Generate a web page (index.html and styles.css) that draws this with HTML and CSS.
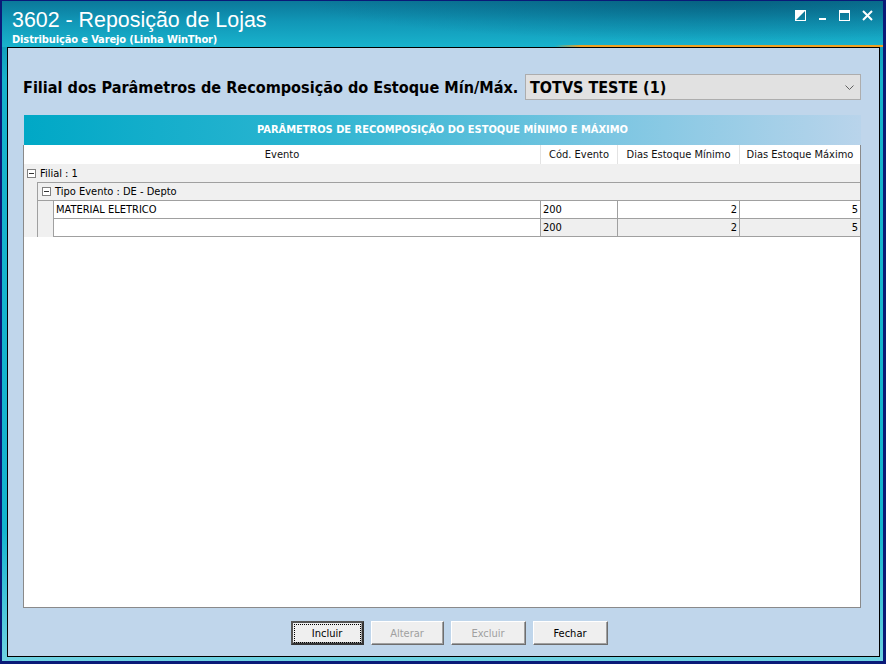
FILE: index.html
```html
<!DOCTYPE html>
<html>
<head>
    <meta charset="utf-8">
    <title>3602 - Reposição de Lojas</title>
    <link rel="stylesheet" href="styles.css">
</head>
<body>
    <div class="window">
        <div class="titlebar">
            <div class="title-text">
                <div class="title">3602 - Reposição de Lojas</div>
                <div class="subtitle">Distribuição e Varejo (Linha WinThor)</div>
            </div>
            <div class="win-controls">
                <svg width="11" height="11" viewBox="0 0 11 11">
                    <rect x="0.5" y="0.5" width="10" height="10" fill="none" stroke="#fff"/>
                    <polygon points="0,0 11,0 0,11" fill="#fff"/>
                </svg>
                <svg width="9" height="11" viewBox="0 0 9 11">
                    <rect x="1" y="8" width="7" height="2" fill="#fff"/>
                </svg>
                <svg width="11" height="11" viewBox="0 0 11 11">
                    <rect x="0.5" y="0.5" width="10" height="10" fill="none" stroke="#fff"/>
                    <rect x="0" y="0" width="11" height="3" fill="#fff"/>
                </svg>
                <svg width="11" height="11" viewBox="0 0 11 11">
                    <path d="M1 1 L10 10 M10 1 L1 10" stroke="#fff" stroke-width="2"/>
                </svg>
            </div>
            <div class="accent-line"></div>
        </div>

        <div class="client">
            <div class="filter-row">
                <label class="filter-label">Filial dos Parâmetros de Recomposição do Estoque Mín/Máx.</label>
                <div class="combo">
                    <span class="combo-text">TOTVS TESTE (1)</span>
                    <svg class="combo-arrow" width="9" height="5" viewBox="0 0 9 5">
                        <path d="M0.5 0.5 L4.5 4.5 L8.5 0.5" fill="none" stroke="#606060"/>
                    </svg>
                </div>
            </div>

            <div class="group-caption">PARÂMETROS DE RECOMPOSIÇÃO DO ESTOQUE MÍNIMO E MÁXIMO</div>

            <div class="grid">
                <div class="grid-head">
                    <div class="hcell">Evento</div>
                    <div class="hcell">Cód. Evento</div>
                    <div class="hcell">Dias Estoque Mínimo</div>
                    <div class="hcell">Dias Estoque Máximo</div>
                </div>

                <div class="group-row level1"><span class="toggle"></span>Filial : 1</div>
                <div class="group-body">
                    <div class="indent level1"></div>
                    <div class="group-content">
                        <div class="group-row level2"><span class="toggle"></span>Tipo Evento : DE - Depto</div>
                        <div class="group-body">
                            <div class="indent level2"></div>
                            <div class="group-content">
                                <div class="data-row">
                                    <div class="cell">MATERIAL ELETRICO</div>
                                    <div class="cell">200</div>
                                    <div class="cell num">2</div>
                                    <div class="cell num">5</div>
                                </div>
                                <div class="data-row summary">
                                    <div class="cell"></div>
                                    <div class="cell">200</div>
                                    <div class="cell num">2</div>
                                    <div class="cell num">5</div>
                                </div>
                            </div>
                        </div>
                    </div>
                </div>
            </div>

            <div class="buttons">
                <button class="btn default"><span class="focus">Incluir</span></button>
                <button class="btn" disabled>Alterar</button>
                <button class="btn wide" disabled>Excluir</button>
                <button class="btn wide">Fechar</button>
            </div>
        </div>
    </div>
</body>
</html>
```

FILE: styles.css
```css
body {
    margin: 0;
    font-family: "DejaVu Sans Condensed", "DejaVu Sans", sans-serif;
    font-size: 11px;
    color: #000;
}
.window {
    width: 886px;
    height: 664px;
    box-sizing: border-box;
    border-left: 2px solid #0a1a78;
    border-right: 3px solid #0a1a78;
    border-bottom: 3px solid #0a1a78;
    border-top: 1px solid #0a1a78;
    background: linear-gradient(to bottom, #0d84a4 0%, #17b2cc 12%, #13b4cf 80%, #6fd2e2 100%);
    display: flex;
    flex-direction: column;
}

/* title bar */
.titlebar {
    position: relative;
    height: 46px;
    flex-shrink: 0;
    background:
        radial-gradient(ellipse 420px 40px at 720px 0px, rgba(0, 70, 100, 0.45), rgba(0, 70, 100, 0) 100%),
        linear-gradient(to bottom, #0b789a 0%, #1197b7 45%, #19b3cd 100%);
    display: flex;
    justify-content: space-between;
}
.title-text {
    padding: 8px 0 0 10px;
    color: #fff;
}
.title {
    font-family: "Liberation Sans", Arial, sans-serif;
    font-size: 21.4px;
    line-height: 22px;
}
.subtitle {
    font-weight: bold;
    font-size: 11px;
    line-height: 14px;
    margin-top: 2px;
    letter-spacing: -0.12px;
}
.win-controls {
    display: flex;
    gap: 12px;
    align-items: center;
    height: 11px;
    margin: 9px 10px 0 0;
}
.win-controls svg {
    display: block;
}
.accent-line {
    position: absolute;
    left: 553px;
    right: 0;
    bottom: 0;
    height: 2px;
    background: linear-gradient(to right, rgba(240, 160, 32, 0) 0%, #f0a020 8%, #f0a020 100%);
}

/* main area */
.client {
    flex: 1;
    margin: 0 3px 4px 5px;
    border: 1px solid #000;
    background: #c0d6eb;
    display: flex;
    flex-direction: column;
    padding: 25px 18px 0 15px;
}
.filter-row {
    display: flex;
    align-items: center;
    justify-content: space-between;
    height: 28px;
}
.filter-label {
    font-weight: bold;
    font-size: 16.1px;
    color: #000;
}
.combo {
    width: 336px;
    height: 26px;
    box-sizing: border-box;
    border: 1px solid #adadad;
    background: #e1e1e1;
    display: flex;
    align-items: center;
    justify-content: space-between;
    padding: 0 6px 0 4px;
}
.combo-text {
    font-weight: bold;
    font-size: 16px;
}
.group-caption {
    margin: 14px 0 0 1px;
    height: 30px;
    line-height: 30px;
    text-align: center;
    color: #fff;
    font-weight: bold;
    font-size: 11px;
    background: linear-gradient(to right, #00a8c6 0%, #2db5d1 35%, #7cc6e2 70%, #b9d4eb 100%);
}

/* tree grid */
.grid {
    flex: 1;
    background: #fff;
    border: 1px solid #8a8a8a;
    border-top: none;
}
.grid-head, .data-row {
    display: grid;
    grid-template-columns: 1fr 77px 122px 120px;
}
.hcell {
    height: 19px;
    line-height: 20px;
    text-align: center;
    border-right: 1px solid #e3e3e3;
    color: #111;
}
.hcell:last-child {
    border-right: none;
}
.group-row {
    height: 17px;
    line-height: 17px;
    background: #f0f0f0;
    border-bottom: 1px solid #a0a0a0;
    display: flex;
    align-items: center;
}
.group-row.level1 {
    padding-left: 3px;
    border-bottom: none;
    height: 18px;
}
.group-row.level2 {
    padding-left: 4px;
}
.toggle {
    width: 7px;
    height: 7px;
    border: 1px solid #808080;
    background: #fff;
    margin-right: 4px;
    position: relative;
}
.toggle::after {
    content: "";
    position: absolute;
    left: 1px;
    right: 1px;
    top: 3px;
    height: 1px;
    background: #333;
}
.group-body {
    display: flex;
}
.indent {
    background: #f0f0f0;
    border-right: 1px solid #a0a0a0;
}
.indent.level1 {
    width: 13px;
}
.indent.level2 {
    width: 15px;
}
.group-content {
    flex: 1;
    border-top: 1px solid #a0a0a0;
}
.group-content .group-content {
    border-top: none;
}
.cell {
    height: 17px;
    line-height: 18px;
    padding: 0 2px;
    border-right: 1px solid #a0a0a0;
    border-bottom: 1px solid #a0a0a0;
    white-space: nowrap;
    overflow: hidden;
}
.cell:last-child {
    border-right: none;
}
.cell.num {
    text-align: right;
}
.summary .cell {
    background: #efefef;
}
.summary .cell:first-child {
    background: #fff;
}

/* buttons */
.buttons {
    display: flex;
    justify-content: center;
    gap: 7px;
    padding: 13px 0 11px 14px;
}
.btn {
    width: 73px;
    height: 24px;
    font-family: inherit;
    font-size: 11px;
    background: #efefef;
    color: #000;
    border: 1px solid;
    border-color: #fff #6e6e6e #6e6e6e #fff;
    box-shadow: inset -1px -1px 0 #a0a0a0;
    padding: 0;
}
.btn.wide {
    width: 75px;
}
.btn:disabled {
    color: #a0a0a0;
}
.btn.default {
    border: 2px solid #555;
    border-color: #555 #333 #333 #555;
}
.btn .focus {
    display: block;
    margin: 1px;
    border: 1px dotted #000;
    line-height: 17px;
}
```
